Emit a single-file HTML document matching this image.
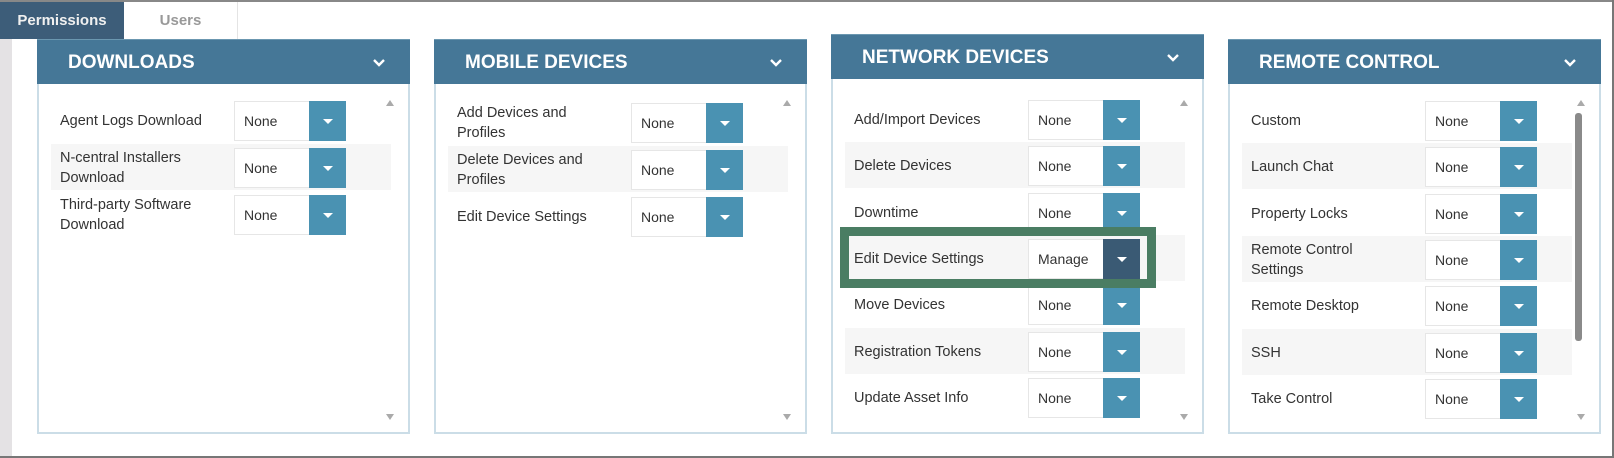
<!DOCTYPE html><html><head><style>
*{margin:0;padding:0;box-sizing:border-box}
body{width:1614px;height:458px;position:relative;background:#fff;font-family:"Liberation Sans",sans-serif;overflow:hidden}
.a{position:absolute}
.hd{position:absolute;height:45px;background:#457797;color:#fff;font-weight:bold;font-size:19px;line-height:45px;padding-left:31px;border-top:1px solid #6b97b0}
.hd svg{position:absolute;right:24px;top:18px}
.bd{position:absolute;border:2px solid #cbdde7;border-top:none;background:#fff}
.row{position:absolute;height:46px}
.row.s{background:#f6f6f6}
.lb{position:absolute;left:23px;font-size:14.5px;color:#333;line-height:20px}
.sel{position:absolute;left:197px;width:112px;height:40px;border:1px solid #e6e6e6;background:#fff;font-size:14px;color:#333;line-height:38px;padding-left:9px}
.btn{position:absolute;right:-1px;top:-1px;width:37px;height:40px;background:#4a92b2}
.btn:after{content:"";position:absolute;left:14px;top:18px;border-left:5px solid transparent;border-right:5px solid transparent;border-top:5px solid #fff}
.up{position:absolute;width:0;height:0;border-left:4px solid transparent;border-right:4px solid transparent;border-bottom:6px solid #aaa}
.dn{position:absolute;width:0;height:0;border-left:4px solid transparent;border-right:4px solid transparent;border-top:6px solid #aaa}
</style></head><body>
<div class="a" style="left:0;top:0;width:1614px;height:2px;background:#888"></div>
<div class="a" style="right:0;top:0;width:2px;height:458px;background:#777"></div>
<div class="a" style="left:0;bottom:0;width:1614px;height:2px;background:#777"></div>
<div class="a" style="left:0;top:39px;width:12px;height:417px;background:#e4e2e4"></div>
<div class="a" style="left:0;top:2px;width:124px;height:37px;background:#3d5d79;color:#f0f0f0;font-size:15px;font-weight:bold;line-height:37px;text-align:center">Permissions</div>
<div class="a" style="left:124px;top:2px;width:114px;height:37px;border-right:1px solid #e4e4e4;color:#999;font-size:15px;font-weight:bold;line-height:37px;text-align:center">Users</div>
<div id="p"></div>
<script>
const panels=[
{x:37,t:39,title:"DOWNLOADS",start:101,rows:[["Agent Logs Download"],["N-central Installers","Download"],["Third-party Software","Download"]]},
{x:434,t:39,title:"MOBILE DEVICES",start:103,rows:[["Add Devices and","Profiles"],["Delete Devices and","Profiles"],["Edit Device Settings"]]},
{x:831,t:34,title:"NETWORK DEVICES",start:100,rows:[["Add/Import Devices"],["Delete Devices"],["Downtime"],["Edit Device Settings"],["Move Devices"],["Registration Tokens"],["Update Asset Info"]]},
{x:1228,t:39,title:"REMOTE CONTROL",start:101,rows:[["Custom"],["Launch Chat"],["Property Locks"],["Remote Control","Settings"],["Remote Desktop"],["SSH"],["Take Control"]]}];
let h="";
panels.forEach((p,pi)=>{
h+=`<div class="hd" style="left:${p.x}px;top:${p.t}px;width:373px">${p.title}<svg width="14" height="9" viewBox="0 0 14 9"><path d="M2 2l5 5 5-5" stroke="#fff" stroke-width="2.4" fill="none"/></svg></div>`;
const bt=p.t+45;
h+=`<div class="bd" style="left:${p.x}px;top:${bt}px;width:373px;height:${434-bt}px"></div>`;
h+=`<div class="up" style="left:${p.x+349}px;top:100px"></div><div class="dn" style="left:${p.x+349}px;top:414px"></div>`;
const pitch=pi<2?47:46.3;
p.rows.forEach((r,i)=>{
const y=p.start+i*pitch;
const hl=(pi==2&&i==3);
h+=`<div class="row${i%2?' s':''}" style="left:${p.x+14}px;top:${y-4}px;width:${pi==3?330:340}px"></div>`;
const ly=r.length>1?y:y+10;
h+=`<div class="lb" style="left:${p.x+23}px;top:${ly}px">${r.join("<br>")}</div>`;
h+=`<div class="sel" style="left:${p.x+197}px;top:${y}px">${hl?"Manage":"None"}<div class="btn"${hl?' style="background:#3a5a74"':''}></div></div>`;
});
});
h+=`<div class="a" style="left:1575px;top:113px;width:7px;height:228px;background:#8a8a8a;border-radius:3px"></div>`;
h+=`<div class="a" style="left:840px;top:227px;width:316px;height:61px;border:9px solid #4a7d63"></div>`;
document.getElementById("p").innerHTML=h;
</script>
</body></html>
